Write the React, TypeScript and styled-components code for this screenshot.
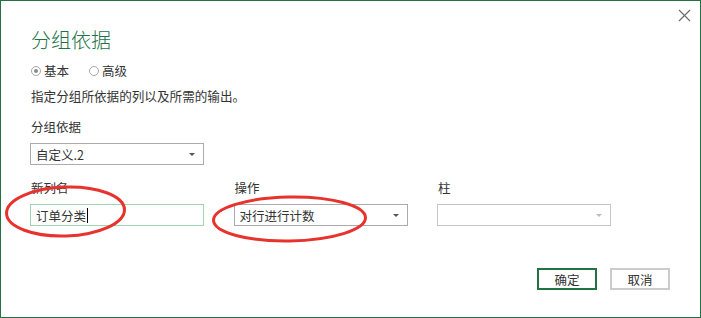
import React from "react";
import styled, { createGlobalStyle } from "styled-components";

const GlobalStyle = createGlobalStyle`
  html, body {
    margin: 0;
    padding: 0;
    background: #ffffff;
  }
  body {
    font-family: "Noto Sans CJK SC", "Noto Sans", sans-serif;
    color: #333333;
  }
`;

const Dialog = styled.div`
  position: relative;
  width: 701px;
  height: 318px;
  box-sizing: border-box;
  border: 1px solid #217346;
  padding: 26px 30px 0 30px;
  display: flex;
  flex-direction: column;
  background: #ffffff;
`;

const CloseButton = styled.button`
  position: absolute;
  top: 7px;
  right: 9px;
  width: 14px;
  height: 14px;
  padding: 0;
  border: none;
  background: none;
  display: flex;
  align-items: center;
  justify-content: center;
`;

const Title = styled.div`
  font-size: 20px;
  font-weight: 300;
  line-height: 26px;
  color: #217346;
  height: 26px;
`;

const RadioRow = styled.div`
  display: flex;
  align-items: center;
  gap: 20px;
  margin-top: 10px;
  font-size: 12.5px;
  line-height: 16px;
`;

const RadioOption = styled.label`
  display: flex;
  align-items: center;
  gap: 3px;
`;

const RadioCircle = styled.span<{ $checked?: boolean }>`
  width: 10px;
  height: 10px;
  box-sizing: border-box;
  border-radius: 50%;
  border: 1px solid #a8a8a8;
  display: flex;
  align-items: center;
  justify-content: center;
  &::after {
    content: "";
    width: 4px;
    height: 4px;
    border-radius: 50%;
    background: ${(p) => (p.$checked ? "#8a8a8a" : "transparent")};
  }
`;

const Description = styled.div`
  margin-top: 9px;
  font-size: 12.6px;
  line-height: 16px;
`;

const Label = styled.div`
  font-size: 12.5px;
  line-height: 16px;
`;

const GroupLabel = styled(Label)`
  margin-top: 15px;
`;

const Select = styled.div<{ $disabled?: boolean }>`
  width: 174px;
  height: 22px;
  box-sizing: border-box;
  margin-left: -1px;
  border: 1px solid ${(p) => (p.$disabled ? "#c6c6c6" : "#ababab")};
  display: flex;
  align-items: center;
  justify-content: space-between;
  padding: 0 8px 0 5px;
  font-size: 12.5px;
  background: #ffffff;
`;

const Arrow = styled.span<{ $disabled?: boolean }>`
  width: 0;
  height: 0;
  border-left: 3px solid transparent;
  border-right: 3px solid transparent;
  border-top: 3px solid ${(p) => (p.$disabled ? "#bdbdbd" : "#555555")};
`;

const TopSelect = styled(Select)`
  margin-top: 8px;
`;

const Fields = styled.div`
  display: grid;
  grid-template-columns: 174px 174px 174px;
  column-gap: 29.5px;
  margin-top: 15px;
  margin-left: -1px;
`;

const Field = styled.div`
  display: flex;
  flex-direction: column;
  gap: 8px;
  ${Label} {
    padding-left: 1px;
  }
  ${Select} {
    margin-left: 0;
  }
`;

const TextInput = styled.div`
  width: 174px;
  height: 22px;
  box-sizing: border-box;
  border: 1px solid #9fd5b2;
  display: flex;
  align-items: center;
  padding: 0 5px;
  font-size: 12.5px;
`;

const Caret = styled.span`
  width: 1px;
  height: 15px;
  background: #000000;
  margin-left: 1px;
`;

const Buttons = styled.div`
  display: flex;
  justify-content: flex-end;
  gap: 13px;
  margin-top: 42px;
`;

const Button = styled.button<{ $primary?: boolean }>`
  width: 60px;
  height: 22px;
  box-sizing: border-box;
  border: ${(p) => (p.$primary ? "2px solid #217346" : "2px solid #cccccc")};
  background: #ffffff;
  font-family: "Noto Sans CJK SC", sans-serif;
  font-size: 12.5px;
  color: #333333;
  padding: 0;
`;

const Annotations = styled.svg`
  position: absolute;
  left: -1px;
  top: -1px;
  pointer-events: none;
`;

export default function App() {
  return (
    <>
      <GlobalStyle />
      <Dialog>
        <CloseButton aria-label="close">
          <svg width="13" height="13" viewBox="0 0 13 13">
            <path d="M1 1 L12 12 M12 1 L1 12" stroke="#6e6e6e" strokeWidth="1.2" fill="none" />
          </svg>
        </CloseButton>
        <Title>分组依据</Title>
        <RadioRow>
          <RadioOption>
            <RadioCircle $checked />
            基本
          </RadioOption>
          <RadioOption>
            <RadioCircle />
            高级
          </RadioOption>
        </RadioRow>
        <Description>指定分组所依据的列以及所需的输出。</Description>
        <GroupLabel>分组依据</GroupLabel>
        <TopSelect>
          <span>自定义.2</span>
          <Arrow />
        </TopSelect>
        <Fields>
          <Field>
            <Label>新列名</Label>
            <TextInput>
              订单分类
              <Caret />
            </TextInput>
          </Field>
          <Field>
            <Label>操作</Label>
            <Select>
              <span>对行进行计数</span>
              <Arrow />
            </Select>
          </Field>
          <Field>
            <Label>柱</Label>
            <Select $disabled>
              <span />
              <Arrow $disabled />
            </Select>
          </Field>
        </Fields>
        <Buttons>
          <Button $primary>确定</Button>
          <Button>取消</Button>
        </Buttons>
        <Annotations width="701" height="318" viewBox="0 0 701 318">
          <ellipse cx="65.5" cy="211.5" rx="59" ry="24.5" fill="none" stroke="#e8322d" strokeWidth="3" transform="rotate(-2 65.5 211.5)" />
          <ellipse cx="289.5" cy="219" rx="76" ry="22" fill="none" stroke="#e8322d" strokeWidth="3" transform="rotate(-1 289.5 219)" />
        </Annotations>
      </Dialog>
    </>
  );
}
